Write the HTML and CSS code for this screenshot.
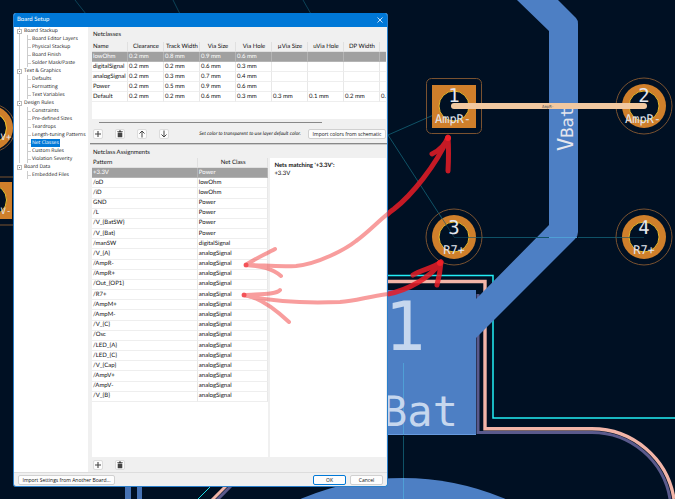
FILE: index.html
```html
<!DOCTYPE html>
<html lang="en">
<head>
    <meta charset="UTF-8">
    <meta name="viewport" content="width=device-width, initial-scale=1.0">
    <title>Board Setup</title>
    <link rel="stylesheet" href="styles.css">
</head>
<body>
<!-- board canvas -->
<svg class="board" width="675" height="499" viewBox="0 0 675 499">
    <g fill="none" stroke="#0c4358" stroke-width="1">
        <path d="M75 0L86 14M173 0L180 14M303 0L311 14"/>
    </g>
    <!-- bottom left pads and tracks -->
    <circle cx="-9" cy="128" r="24" fill="none" stroke="#7a5230"/>
    <circle cx="-9" cy="128" r="18.5" fill="none" stroke="#cf7f2b" stroke-width="7"/>
    <circle cx="-9" cy="128" r="15.5" fill="none" stroke="#e8c22c"/>
    <path d="M0 177H13M0 225H13" stroke="#7a5230"/>
    <rect x="-31" y="182" width="43" height="37" fill="#cf7f2b"/>
    <circle cx="-9" cy="200" r="15.5" fill="#001023" stroke="#e8c22c"/>
    <path d="M125 487h6v12h-6zM137 487h5v12h-5z" fill="#4672b4"/>
    <path d="M210 487L198 499" stroke="#20dfe8"/>
    <path d="M226 486L212 500" stroke="#f2b5a8" stroke-width="3"/>
    <path d="M231 486L217 500" stroke="#5a5a8c" stroke-width="3"/>

    <!-- copper pours -->
    <circle cx="403" cy="738" r="260" fill="#4d7fc4"/>
    <path d="M380 290H476V435H380z" fill="#4d7fc4"/>
    <path d="M380 434.5H476" stroke="#679be0"/>
    <path d="M380 275.500H493V418H675" fill="none" stroke="#22eef6" stroke-width="1.500"/>
    <path d="M478 294V432.500H592A79 79 0 0 1 670 499" fill="none" stroke="#5a5a8c" stroke-width="3"/>
    <path d="M380 281.500H485V428.700H592A83 83 0 0 1 674 499" fill="none" stroke="#f2b5a8" stroke-width="3.400"/>
    <path d="M517 0H558L576 18Q578 20 578 24V232Q578 236 575 239L476 338V299L549 225V31z" fill="#4d7fc4"/>

    <!-- ratsnest -->
    <g fill="none" stroke="#0f5266" stroke-width="1">
        <path d="M388 135L454 106M388 135L454 237M454 237.500H549M578 237.500H644"/>
        <path d="M549 237.500H577M403.500 363V435M403.500 478V499" stroke="#4f9fd6"/>
        <path d="M403.500 436V478"/>
    </g>

    <!-- pads -->
    <rect x="426.500" y="78.500" width="55" height="55" rx="5" fill="none" stroke="#7a5230"/>
    <rect x="432" y="85" width="44" height="43" fill="#cf7f2b"/>
    <circle cx="454" cy="106" r="15" fill="#001023" stroke="#e8b82c"/>
    <circle cx="644" cy="106" r="28" fill="none" stroke="#7a5230"/>
    <circle cx="644" cy="106" r="22" fill="#cf7f2b"/>
    <circle cx="644" cy="106" r="15" fill="#001023" stroke="#e8b82c"/>
    <circle cx="454" cy="237" r="28" fill="none" stroke="#7a5230"/>
    <circle cx="454" cy="237" r="22" fill="#cf7f2b"/>
    <circle cx="454" cy="237" r="15" fill="#001023" stroke="#e8b82c"/>
    <circle cx="644" cy="237" r="28" fill="none" stroke="#7a5230"/>
    <circle cx="644" cy="237" r="22" fill="#cf7f2b"/>
    <circle cx="644" cy="237" r="15" fill="#001023" stroke="#e8b82c"/>
    <path d="M454 237.500H482M616 237.500H644M440 215L454 237" stroke="#0f5266" stroke-opacity=".6" fill="none"/>
    <g class="net-label" text-anchor="middle">
        <text class="track-label" transform="translate(573 151) rotate(-90)" text-anchor="start">V<tspan class="sub">Bat</tspan></text>
        <text class="pad-number" x="454" y="102">1</text>
        <text class="pad-number" x="644" y="102">2</text>
        <text class="pad-number" x="454" y="234">3</text>
        <text class="pad-number" x="644" y="234">4</text>
    </g>
    <path d="M454 106H644" stroke="#f1c8a0" stroke-width="6" stroke-linecap="round"/>
    <g class="net-label" text-anchor="middle">
        <text class="tiny" x="548" y="108">AmpR-</text>
        <text x="453" y="123">AmpR-</text>
        <text x="643" y="123">AmpR-</text>
        <text x="454" y="254">R7+</text>
        <text x="644" y="254">R7+</text>
        <text class="edge-label" x="6" y="140">V+</text>
        <text class="edge-label" x="6" y="214">V-</text>
        <text class="big-number" x="405" y="350">1</text>
        <text class="big-net" x="420" y="426">Bat</text>
    </g>
</svg>

<main class="dialog">
    <header class="titlebar">
        <h1>Board Setup</h1>
        <button class="close" aria-label="Close">
            <svg width="6" height="6" viewBox="0 0 6 6"><path d="M.5 .5L5.500 5.500M5.500 .5L.5 5.500" stroke="#fff" stroke-width=".8"/></svg>
        </button>
    </header>

    <div class="content">
        <nav class="tree">
            <ul>
                <li><button class="expander" aria-label="Collapse"></button><a href="#">Board Stackup</a>
                    <ul>
                        <li><a href="#">Board Editor Layers</a></li>
                        <li><a href="#">Physical Stackup</a></li>
                        <li><a href="#">Board Finish</a></li>
                        <li><a href="#">Solder Mask/Paste</a></li>
                    </ul>
                </li>
                <li><button class="expander" aria-label="Collapse"></button><a href="#">Text &amp; Graphics</a>
                    <ul>
                        <li><a href="#">Defaults</a></li>
                        <li><a href="#">Formatting</a></li>
                        <li><a href="#">Text Variables</a></li>
                    </ul>
                </li>
                <li><button class="expander" aria-label="Collapse"></button><a href="#">Design Rules</a>
                    <ul>
                        <li><a href="#">Constraints</a></li>
                        <li><a href="#">Pre-defined Sizes</a></li>
                        <li><a href="#">Teardrops</a></li>
                        <li><a href="#">Length-tuning Patterns</a></li>
                        <li><a href="#" class="selected">Net Classes</a></li>
                        <li><a href="#">Custom Rules</a></li>
                        <li><a href="#">Violation Severity</a></li>
                    </ul>
                </li>
                <li><button class="expander" aria-label="Collapse"></button><a href="#">Board Data</a>
                    <ul>
                        <li><a href="#">Embedded Files</a></li>
                    </ul>
                </li>
            </ul>
        </nav>

        <div class="panels">
            <section class="netclasses">
                <h2>Netclasses</h2>
                <div class="grid-scroll">
                    <table class="grid classes">
                        <thead>
                        <tr><th>Name</th><th>Clearance</th><th>Track Width</th><th>Via Size</th><th>Via Hole</th><th>µVia Size</th><th>uVia Hole</th><th>DP Width</th><th></th></tr>
                        </thead>
                        <tbody>
                        <tr class="current"><td>lowOhm</td><td>0.2 mm</td><td>0.8 mm</td><td>0.9 mm</td><td>0.6 mm</td><td></td><td></td><td></td><td></td></tr>
                        <tr><td>digitalSignal</td><td>0.2 mm</td><td>0.2 mm</td><td>0.6 mm</td><td>0.3 mm</td><td></td><td></td><td></td><td></td></tr>
                        <tr><td>analogSignal</td><td>0.2 mm</td><td>0.3 mm</td><td>0.7 mm</td><td>0.4 mm</td><td></td><td></td><td></td><td></td></tr>
                        <tr><td>Power</td><td>0.2 mm</td><td>0.5 mm</td><td>0.9 mm</td><td>0.6 mm</td><td></td><td></td><td></td><td></td></tr>
                        <tr><td>Default</td><td>0.2 mm</td><td>0.2 mm</td><td>0.6 mm</td><td>0.3 mm</td><td>0.3 mm</td><td>0.1 mm</td><td>0.2 mm</td><td>0.</td></tr>
                        </tbody>
                    </table>
                </div>
                <div class="scrollbar"></div>
                <div class="toolbar">
                    <button class="icon" aria-label="Add"><svg width="8" height="8" viewBox="0 0 8 8"><path d="M4 1V7M1 4H7" stroke="#444" stroke-width="1.100"/></svg></button>
                    <button class="icon" aria-label="Delete"><svg width="8" height="8" viewBox="0 0 8 8"><path d="M1.300 1.200H3V.6H5V1.200H6.700V2H1.300zM1.700 2.500H6.300V7.300H1.700z" fill="#444"/></svg></button>
                    <button class="icon" aria-label="Move up"><svg width="8" height="8" viewBox="0 0 8 8"><path d="M4 7.500V1M1.500 3.500L4 1L6.500 3.500" fill="none" stroke="#444"/></svg></button>
                    <button class="icon" aria-label="Move down"><svg width="8" height="8" viewBox="0 0 8 8"><path d="M4 .5V7M1.500 4.500L4 7L6.500 4.500" fill="none" stroke="#444"/></svg></button>
                    <em>Set color to transparent to use layer default color.</em>
                    <button class="push">Import colors from schematic</button>
                </div>
            </section>

            <section class="assignments">
                <h2>Netclass Assignments</h2>
                <div class="split">
                    <div class="list">
                        <table class="grid patterns">
                            <thead>
                            <tr><th>Pattern</th><th>Net Class</th></tr>
                            </thead>
                            <tbody>
                            <tr class="current"><td>+3.3V</td><td>Power</td></tr>
                            <tr><td>/oD</td><td>lowOhm</td></tr>
                            <tr><td>/iD</td><td>lowOhm</td></tr>
                            <tr><td>GND</td><td>Power</td></tr>
                            <tr><td>/L</td><td>Power</td></tr>
                            <tr><td>/V_{BatSW}</td><td>Power</td></tr>
                            <tr><td>/V_{Bat}</td><td>Power</td></tr>
                            <tr><td>/manSW</td><td>digitalSignal</td></tr>
                            <tr><td>/V_{A}</td><td>analogSignal</td></tr>
                            <tr><td>/AmpR-</td><td>analogSignal</td></tr>
                            <tr><td>/AmpR+</td><td>analogSignal</td></tr>
                            <tr><td>/Out_{OP1}</td><td>analogSignal</td></tr>
                            <tr><td>/R7+</td><td>analogSignal</td></tr>
                            <tr><td>/AmpM+</td><td>analogSignal</td></tr>
                            <tr><td>/AmpM-</td><td>analogSignal</td></tr>
                            <tr><td>/V_{C}</td><td>analogSignal</td></tr>
                            <tr><td>/Osc</td><td>analogSignal</td></tr>
                            <tr><td>/LED_{A}</td><td>analogSignal</td></tr>
                            <tr><td>/LED_{C}</td><td>analogSignal</td></tr>
                            <tr><td>/V_{Cap}</td><td>analogSignal</td></tr>
                            <tr><td>/AmpV+</td><td>analogSignal</td></tr>
                            <tr><td>/AmpV-</td><td>analogSignal</td></tr>
                            <tr><td>/V_{B}</td><td>analogSignal</td></tr>
                            </tbody>
                        </table>
                    </div>
                    <div class="matches">
                        <strong>Nets matching '+3.3V':</strong>
                        <p>+3.3V</p>
                    </div>
                </div>
                <div class="toolbar">
                    <button class="icon" aria-label="Add"><svg width="8" height="8" viewBox="0 0 8 8"><path d="M4 1V7M1 4H7" stroke="#444" stroke-width="1.100"/></svg></button>
                    <button class="icon" aria-label="Delete"><svg width="8" height="8" viewBox="0 0 8 8"><path d="M1.300 1.200H3V.6H5V1.200H6.700V2H1.300zM1.700 2.500H6.300V7.300H1.700z" fill="#444"/></svg></button>
                </div>
            </section>
        </div>
    </div>

    <footer class="actions">
        <button class="push import">Import Settings from Another Board...</button>
        <button class="push ok">OK</button>
        <button class="push cancel">Cancel</button>
    </footer>
</main>

<!-- hand drawn arrows, paler where they cross the dialog -->
<svg class="arrows" width="675" height="499" viewBox="0 0 675 499">
    <defs>
        <clipPath id="overDialog"><path d="M0 0H388V499H0z"/></clipPath>
        <clipPath id="overBoard"><path d="M388 0H675V499H388z"/></clipPath>
        <g id="strokes" fill="none" stroke-linecap="round" stroke-linejoin="round">
            <path d="M246 265C262 265 276 267 296 266C318 264 346 249 356 241C370 231 380 219 394 209C412 195 436 165 448 138"/>
            <path d="M275 249C266 254 254 259 246 265C260 266 272 268 281 276"/>
            <path d="M432 154Q444 148 448 137Q449 152 448 171"/>
            <path d="M244 295C270 302 310 303 340 302C356 301 366 297 388 294C408 290 430 278 441 262"/>
            <path d="M280 290C276 295 258 294 244 295C260 297 276 310 289 322"/>
            <path d="M413 275C420 270 434 268 441 262Q440 274 437 285"/>
        </g>
    </defs>
    <g clip-path="url(#overDialog)" opacity=".45"><use href="#strokes" stroke="#f02828" stroke-width="4"/></g>
    <g clip-path="url(#overBoard)" opacity=".85"><use href="#strokes" stroke="#e81c26" stroke-width="5"/></g>
    <g fill="#f02028">
        <circle cx="246" cy="265" r="2.500" opacity=".6"/>
        <circle cx="244" cy="295" r="2.500" opacity=".6"/>
        <circle cx="448" cy="138" r="3"/>
        <circle cx="440" cy="263" r="3"/>
    </g>
</svg>
</body>
</html>
```
FILE: styles.css
```css
body {
    margin: 0;
    min-height: 100vh;
    overflow: hidden;
    background-color: #001023;
    font-family: Lato, "Open Sans", sans-serif;
    font-size: 6px;
    line-height: 8px;
    text-rendering: geometricPrecision;
    font-variant-ligatures: none;
    color: #111;
}
.board,
.arrows {
    position: absolute;
    top: 0;
    left: 0;
}
.arrows {
    pointer-events: none;
}
.net-label {
    font-family: "DejaVu Sans Mono", monospace;
    font-size: 12px;
    fill: #e4e6ee;
}
.pad-number {
    font-size: 19px;
}
.track-label {
    font-size: 22px;
}
.track-label .sub {
    font-size: 17px;
}
.edge-label {
    font-size: 9px;
}
.tiny {
    font-size: 4px;
    fill: #555;
}
.big-number {
    font-size: 68px;
    fill: #c6d7ee;
}
.big-net {
    font-size: 42px;
    fill: #c6d7ee;
}
.dialog {
    position: absolute;
    inset: 13px 287px 12px 13px;
    display: flex;
    flex-direction: column;
    box-sizing: border-box;
    border: 1px solid #2a7fcb;
    border-top: 0;
    border-radius: 3px;
    overflow: hidden;
    background-color: #f0f0f0;
}
.titlebar {
    display: flex;
    align-items: center;
    justify-content: space-between;
    height: 14px;
    padding: 0 4px 0 3px;
    background-color: #0078d7;
    color: white;
}
h1,
h2 {
    margin: 0;
    font-size: 6px;
    font-weight: normal;
}
button {
    font: inherit;
    color: inherit;
    padding: 0;
    cursor: pointer;
}
.close {
    display: flex;
    border: 0;
    background: none;
}
.content {
    display: flex;
    flex: 1;
    min-height: 0;
}
.tree {
    width: 74px;
    flex-shrink: 0;
    background-color: white;
    font-family: "Open Sans", sans-serif;
    font-size: 5px;
}
.tree ul {
    list-style: none;
    margin: 0;
    padding: 0;
}
.tree > ul {
    padding: 0 0 0 3px;
}
.tree li {
    white-space: nowrap;
}
.tree > ul > li {
    background: linear-gradient(#ccc, #ccc) 2px 0 / 1px 100% no-repeat;
}
.tree > ul > li:last-child {
    background: none;
}
.tree a {
    display: inline-block;
    height: 8px;
    padding: 0 1px;
    vertical-align: top;
    color: inherit;
    text-decoration: none;
}
.tree ul ul {
    margin-left: 10px;
    border-left: 1px solid #ccc;
}
.tree ul ul li::before {
    content: "";
    display: inline-block;
    width: 3px;
    height: 4px;
    border-bottom: 1px solid #ccc;
    vertical-align: top;
}
.tree a.selected {
    background-color: #0078d7;
    color: white;
}
.expander {
    width: 5px;
    height: 5px;
    margin: 2px 1px 0 0;
    border: 1px solid #bbb;
    background: linear-gradient(#777, #777) center / 1px 1px no-repeat #fff;
    vertical-align: top;
}
.panels {
    display: flex;
    flex: 1;
    flex-direction: column;
    min-width: 0;
    margin-left: 2px;
}
.netclasses {
    padding: 4px 1px 0 2px;
    border-bottom: 1px solid #888;
    box-shadow: 0 1px #ccc;
}
.netclasses .toolbar {
    height: 14px;
    padding-bottom: 2px;
}
h2 {
    height: 11px;
    padding-left: 1px;
}
.grid-scroll {
    height: 77px;
    overflow: hidden;
    background-color: white;
}
.grid {
    border-collapse: separate;
    border-spacing: 0;
    table-layout: fixed;
    background-color: white;
}
.grid th,
.grid td {
    box-sizing: border-box;
    height: 10px;
    padding: 0 0 0 1px;
    border-right: 1px solid #e8e8e8;
    border-bottom: 1px solid #eee;
    font-weight: normal;
    text-align: left;
    white-space: nowrap;
}
.grid th {
    background-color: #f0f0f0;
    border-color: #e0e0e0;
    text-align: center;
}
.grid th:first-child {
    text-align: left;
}
.grid .current td {
    background-color: #a0a0a0;
    border-color: #b4b4b4;
    color: white;
}
.classes {
    width: 324px;
}
.patterns {
    width: 100%;
    height: 244px;
}
.patterns th:first-child {
    width: 60%;
}
.scrollbar {
    height: 8px;
    background: linear-gradient(#888, #888) 7px 3px / 223px 1px no-repeat;
}
.toolbar {
    display: flex;
    align-items: center;
    height: 15px;
    gap: 11px;
}
.icon {
    display: flex;
    align-items: center;
    justify-content: center;
    width: 10px;
    height: 10px;
    margin-left: 1px;
    border: 1px solid #dcdcdc;
    border-radius: 2px;
    background-color: #fcfcfc;
    flex-shrink: 0;
}
.icon svg {
    flex-shrink: 0;
}
.toolbar em {
    margin-left: auto;
    font-size: 5px;
    white-space: nowrap;
}
.toolbar .push {
    width: 78px;
    margin-left: -4px;
    flex-shrink: 0;
}
.push {
    height: 10px;
    box-sizing: border-box;
    border: 1px solid #d0d0d0;
    border-radius: 2px;
    background-color: #fdfdfd;
    font-family: "Open Sans", sans-serif;
    font-size: 5px;
    line-height: 8px;
    white-space: nowrap;
}
.assignments {
    display: flex;
    flex: 1;
    flex-direction: column;
    min-height: 0;
    padding: 5px 1px 0 2px;
}
.assignments h2 {
    height: 9px;
}
.split {
    display: flex;
    flex: 1;
    min-height: 0;
    gap: 2px;
}
.list {
    width: 60%;
    background-color: white;
}
.matches {
    flex: 1;
    padding: 4px;
    background-color: white;
}
.matches p {
    margin: 0;
}
.actions {
    display: flex;
    align-items: center;
    gap: 4px;
    height: 13px;
    padding: 0 4px;
    border-top: 1px solid #ddd;
}
.import {
    width: 97px;
    margin-right: auto;
}
.ok,
.cancel {
    width: 33px;
}
.ok {
    border-color: #0078d7;
}
```
